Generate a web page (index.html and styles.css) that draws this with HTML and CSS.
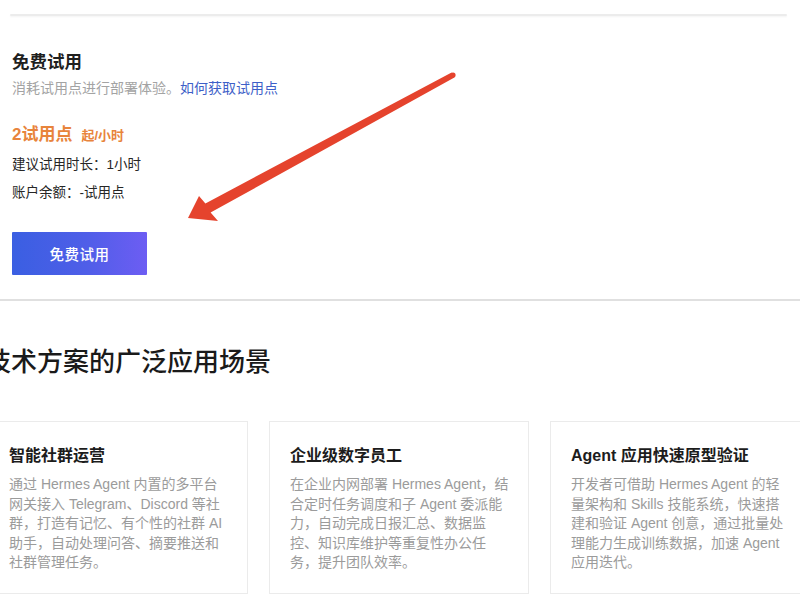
FILE: index.html
```html
<!DOCTYPE html>
<html lang="zh-CN">
<head>
<meta charset="utf-8">
<title>免费试用</title>
<link rel="stylesheet" href="styles.css">
</head>
<body>
<div class="page">
  <div class="topline"></div>
  <section class="trial">
    <h2 class="trial-title">免费试用</h2>
    <p class="trial-desc">消耗试用点进行部署体验。<a class="link" href="#">如何获取试用点</a></p>
    <div class="price"><span class="price-num">2试用点</span><span class="price-unit">起/小时</span></div>
    <p class="info">建议试用时长：1小时</p>
    <p class="info">账户余额：-试用点</p>
    <button class="btn" type="button">免费试用</button>
  </section>
  <div class="divider"></div>
  <section class="scenes">
    <h2 class="scenes-title">技术方案的广泛应用场景</h2>
    <div class="cards">
      <div class="card">
        <h3 class="card-title">智能社群运营</h3>
        <p class="card-desc">通过 Hermes Agent 内置的多平台网关接入 Telegram、Discord 等社群，打造有记忆、有个性的社群 AI 助手，自动处理问答、摘要推送和社群管理任务。</p>
      </div>
      <div class="card">
        <h3 class="card-title">企业级数字员工</h3>
        <p class="card-desc">在企业内网部署 Hermes Agent，结合定时任务调度和子 Agent 委派能力，自动完成日报汇总、数据监控、知识库维护等重复性办公任务，提升团队效率。</p>
      </div>
      <div class="card">
        <h3 class="card-title">Agent 应用快速原型验证</h3>
        <p class="card-desc">开发者可借助 Hermes Agent 的轻量架构和 Skills 技能系统，快速搭建和验证 Agent 创意，通过批量处理能力生成训练数据，加速 Agent 应用迭代。</p>
      </div>
    </div>
  </section>
  <svg class="arrow" width="800" height="600" viewBox="0 0 800 600" aria-hidden="true">
    <polygon points="188,218 218,221 210.6,212.6 454.4,77.4 451.6,72.6 205.4,203.4 199,196" fill="#e5432d"/>
    <circle cx="453" cy="75" r="2.6" fill="#e5432d"/>
  </svg>
</div>
</body>
</html>
```

FILE: styles.css
```css
* { box-sizing: border-box; }
html, body { margin: 0; padding: 0; background: #fff; }
body {
  font-family: "Liberation Sans", "Noto Sans CJK SC", sans-serif;
  color: #222;
}
.page {
  position: relative;
  width: 800px;
  height: 600px;
  overflow: hidden;
  padding-top: 14px;
}
.topline {
  height: 2px;
  margin: 0 13px 0 10px;
  background: #ececec;
  border-radius: 2px;
  box-shadow: 0 1px 2px rgba(0,0,0,0.05);
}
.trial {
  padding-left: 12px;
  display: flex;
  flex-direction: column;
  align-items: flex-start;
}
.trial-title {
  margin: 34px 0 0;
  font-size: 17.5px;
  line-height: 24px;
  font-weight: 600;
  color: #1f1f1f;
}
.trial-desc {
  margin: 4px 0 0;
  font-size: 14px;
  line-height: 20px;
  color: #a3a3a3;
}
.link {
  color: #3e5fc8;
  text-decoration: none;
}
.price {
  margin-top: 25px;
  display: flex;
  align-items: baseline;
  gap: 9px;
  line-height: 24px;
  color: #e8843c;
  font-weight: 600;
}
.price-num { font-size: 17px; }
.price-unit { font-size: 13px; }
.info {
  margin: 7px 0 0;
  font-size: 13.5px;
  line-height: 20px;
  color: #262626;
}
.info + .info { margin-top: 8px; }
.btn {
  margin-top: 29px;
  width: 135px;
  height: 43px;
  border: 0;
  border-radius: 1px;
  background: linear-gradient(90deg, #3a5fe2 0%, #4f5ee8 55%, #6d5df3 100%);
  color: #fff;
  font-family: inherit;
  font-size: 14.5px;
  font-weight: 500;
  letter-spacing: 0.5px;
}
.divider {
  margin-top: 24px;
  height: 2px;
  background: #e0e0e0;
}
.scenes-title {
  margin: 43px 0 0 -15px;
  font-size: 26px;
  line-height: 36px;
  font-weight: 500;
  color: #1a1a1a;
}
.cards {
  margin: 41px 0 0 -12px;
  display: grid;
  grid-template-columns: repeat(3, 260px);
  gap: 21px;
}
.card {
  height: 173px;
  border: 1px solid #ebebeb;
  padding: 23px 18px 0 20px;
}
.card-title {
  margin: 0;
  font-size: 16px;
  line-height: 22px;
  font-weight: 700;
  color: #1c1c1c;
}
.card-desc {
  margin: 8px 0 0;
  font-size: 14px;
  line-height: 19.6px;
  color: #9b9b9b;
}
.arrow {
  position: absolute;
  left: 0;
  top: 0;
  pointer-events: none;
}
```
